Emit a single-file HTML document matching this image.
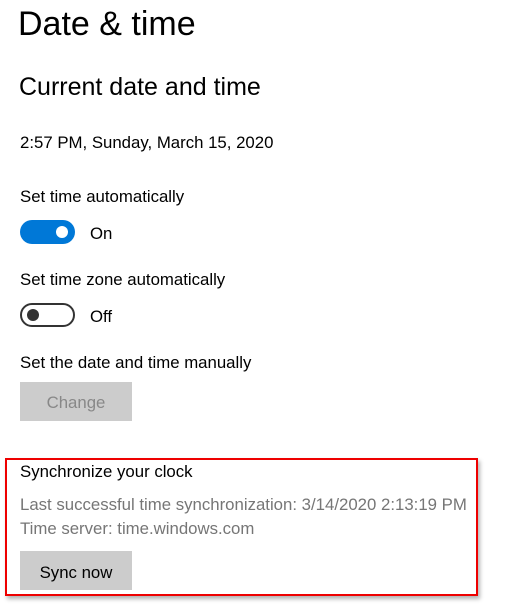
<!DOCTYPE html>
<html><head><style>
body{margin:0;width:522px;height:610px;background:#fff;font-family:"Liberation Sans",sans-serif;color:#000;position:relative;overflow:hidden}
.a{position:absolute;white-space:nowrap}
.t{font-size:16.8px}
.g{color:#767676}
.btn{position:absolute;left:20px;width:112px;height:39px;background:#ccc;font-size:16.8px;text-align:center;line-height:39px}
.tog{position:absolute;left:20px;width:55px;height:24px;border-radius:12px;box-sizing:border-box}
</style></head><body>
<div class="a" style="left:18px;top:5px;font-size:34px">Date &amp; time</div>
<div class="a" style="left:19px;top:73px;font-size:25px">Current date and time</div>
<div class="a t" style="left:20px;top:133px">2:57 PM, Sunday, March 15, 2020</div>
<div class="a t" style="left:20px;top:187px">Set time automatically</div>
<div class="tog" style="top:220px;background:#0078d7"><div style="position:absolute;right:7px;top:6px;width:12px;height:12px;border-radius:6px;background:#fff"></div></div>
<div class="a t" style="left:90px;top:224px">On</div>
<div class="a t" style="left:20px;top:270px">Set time zone automatically</div>
<div class="tog" style="top:303px;border:2px solid #333"><div style="position:absolute;left:5px;top:4px;width:12px;height:12px;border-radius:6px;background:#333"></div></div>
<div class="a t" style="left:90px;top:307px">Off</div>
<div class="a t" style="left:20px;top:353px">Set the date and time manually</div>
<div class="btn" style="top:382px;color:#888;line-height:42px">Change</div>
<div style="position:absolute;left:5px;top:458px;width:473px;height:138px;box-sizing:border-box;border:2px solid #e00;box-shadow:2px 3px 4px rgba(0,0,0,.3)"></div>
<div class="a t" style="left:20px;top:462px">Synchronize your clock</div>
<div class="a t g" style="left:20px;top:495px">Last successful time synchronization: 3/14/2020 2:13:19 PM</div>
<div class="a t g" style="left:20px;top:519px">Time server: time.windows.com</div>
<div class="btn" style="top:551px;line-height:43px">Sync now</div>
</body></html>
